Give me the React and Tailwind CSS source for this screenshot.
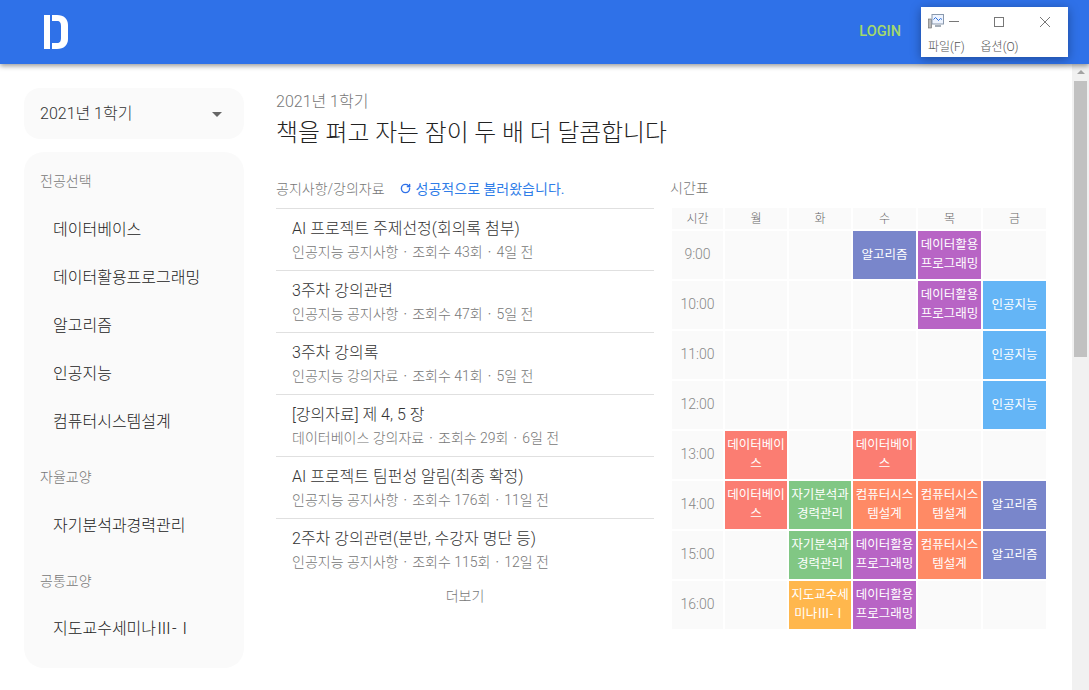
import { RotateCw } from "lucide-react";

const notices = [
  { title: "AI 프로젝트 주제선정(회의록 첨부)", sub: ["인공지능 공지사항", "조회수 43회", "4일 전"] },
  { title: "3주차 강의관련", sub: ["인공지능 공지사항", "조회수 47회", "5일 전"] },
  { title: "3주차 강의록", sub: ["인공지능 강의자료", "조회수 41회", "5일 전"] },
  { title: "[강의자료] 제 4, 5 장", sub: ["데이터베이스 강의자료", "조회수 29회", "6일 전"] },
  { title: "AI 프로젝트 팀펀성 알림(최종 확정)", sub: ["인공지능 공지사항", "조회수 176회", "11일 전"] },
  { title: "2주차 강의관련(분반, 수강자 명단 등)", sub: ["인공지능 공지사항", "조회수 115회", "12일 전"] },
];

const db = { name: "데이터베이스", color: "bg-[#fb7d72]" };
const app = { name: "데이터활용 프로그래밍", color: "bg-[#b864c5]" };
const algo = { name: "알고리즘", color: "bg-[#7986cb]" };
const ai = { name: "인공지능", color: "bg-[#64b5f6]" };
const self = { name: "자기분석과 경력관리", color: "bg-[#81c784]" };
const arch = { name: "컴퓨터시스템설계", color: "bg-[#ff8a65]" };
const sem = { name: "지도교수세미나Ⅲ-Ⅰ", color: "bg-[#ffb74d]" };

const rows = [
  ["9:00", null, null, algo, app, null],
  ["10:00", null, null, null, app, ai],
  ["11:00", null, null, null, null, ai],
  ["12:00", null, null, null, null, ai],
  ["13:00", db, null, db, null, null],
  ["14:00", db, self, arch, arch, algo],
  ["15:00", null, self, app, arch, algo],
  ["16:00", null, sem, app, null, null],
];

function SideItem({ children }) {
  return <div className="h-12 flex items-center pl-[29px] text-base font-light text-[#222]">{children}</div>;
}

function SideLabel({ children, className }) {
  return <div className={`pl-4 text-sm leading-5 font-light text-[#777] ${className}`}>{children}</div>;
}

function Logo() {
  return (
    <svg width="24" height="34" viewBox="0 0 24 34" fill="white">
      <rect x="0" y="0" width="6" height="34" />
      <path d="M8 0h5c7 0 11 4 11 10v14c0 6-4 10-11 10H8v-6h5c3 0 4-2 4-5V11c0-3-1-5-4-5H8z" />
    </svg>
  );
}

function AppIcon() {
  return (
    <svg width="16" height="15" viewBox="0 0 16 15">
      <rect x="0.5" y="5" width="3" height="9" fill="#b8b8b8" stroke="#666" strokeWidth="0.6" />
      <rect x="4" y="0.5" width="11.5" height="9.5" fill="#eef4ff" stroke="#8a99ad" />
      <path d="M5.5 5.5l2-2 3 3 2-2 1.5 1" fill="none" stroke="#2f6fd8" strokeWidth="1" />
      <rect x="7" y="11" width="6" height="2" fill="#a5aeb8" />
    </svg>
  );
}

export default function App() {
  return (
    <div className="h-[690px] w-[1089px] overflow-hidden bg-white font-['Roboto','Noto_Sans_CJK_KR',sans-serif] relative">
      <header className="relative z-10 h-16 bg-[#2f71e8] shadow-[0_2px_5px_rgba(0,0,0,0.4)] flex items-center pl-11 pr-[21px]">
        <Logo />
        <div className="ml-auto text-[14.5px] font-medium text-[#a3d96b] mr-5">LOGIN</div>
        <div className="w-[147px] h-[50px] bg-white shadow-[0_2px_10px_rgba(0,0,0,0.35)] pl-[7px] pr-2 pt-[7px] text-[#555]">
          <div className="flex items-center h-[15px]">
            <AppIcon />
            <div className="ml-[5px] w-[10px] h-px bg-[#777]" />
            <div className="ml-[35px] w-[10px] h-[10px] border border-[#777]" />
            <svg className="ml-[35px]" width="12" height="12" viewBox="0 0 12 12" stroke="#777" fill="none">
              <path d="M1 1l10 10M11 1L1 11" />
            </svg>
          </div>
          <div className="flex gap-4 mt-[11px] text-xs font-light leading-[14px]">
            <span>파일(F)</span>
            <span>옵션(O)</span>
          </div>
        </div>
      </header>

      <div className="flex h-[626px]">
        <aside className="w-[220px] ml-6 mt-6 shrink-0">
          <div className="h-[51px] rounded-2xl bg-[#fafafa] flex items-center justify-between pl-4 pr-[22px] text-base font-light text-[#333]">
            <span>2021년 1학기</span>
            <span className="w-0 h-0 border-x-[5px] border-x-transparent border-t-[5px] border-t-[#666] mt-[2px]" />
          </div>
          <div className="mt-[13px] h-[516px] rounded-[20px] bg-[#fafafa] pt-[19px]">
            <SideLabel>전공선택</SideLabel>
            <div className="mt-[15px]">
              <SideItem>데이터베이스</SideItem>
              <SideItem>데이터활용프로그래밍</SideItem>
              <SideItem>알고리즘</SideItem>
              <SideItem>인공지능</SideItem>
              <SideItem>컴퓨터시스템설계</SideItem>
            </div>
            <SideLabel className="mt-[21px]">자율교양</SideLabel>
            <div className="mt-[15px]">
              <SideItem>자기분석과경력관리</SideItem>
            </div>
            <SideLabel className="mt-[21px]">공통교양</SideLabel>
            <div className="mt-[14px]">
              <SideItem>지도교수세미나Ⅲ-Ⅰ</SideItem>
            </div>
          </div>
        </aside>

        <main className="ml-8 w-[770px] shrink-0 pt-7">
          <div className="text-base leading-5 font-light text-[#777]">2021년 1학기</div>
          <h1 className="mt-[5px] text-[23.8px] leading-8 font-light text-[#222]">책을 펴고 자는 잠이 두 배 더 달콤합니다</h1>

          <div className="flex mt-[27px]">
            <section className="w-[378px] shrink-0">
              <div className="h-8 flex items-center text-sm font-light text-[#777] pb-[7px]">
                <span>공지사항/강의자료</span>
                <RotateCw className="ml-[15px] mr-[5px] text-[#2f71e8]" size={11} strokeWidth={3} />
                <span className="font-normal text-[#2f7de8]">성공적으로 불러왔습니다.</span>
              </div>
              {notices.map((n) => (
                <div key={n.title} className="h-[62px] border-t border-[#e0e0e0] pl-4 pt-2">
                  <div className="text-base leading-6 font-light text-[#333]">{n.title}</div>
                  <div className="mt-[-2px] text-sm leading-6 font-light text-[#777]">
                    {n.sub[0]}
                    <span className="font-['Noto_Sans_CJK_KR',sans-serif]"> · </span>
                    {n.sub[1]}
                    <span className="font-['Noto_Sans_CJK_KR',sans-serif]"> · </span>
                    {n.sub[2]}
                  </div>
                </div>
              ))}
              <div className="text-center text-sm font-light text-[#777] mt-1.5">더보기</div>
            </section>

            <section className="ml-4 w-[376px] shrink-0">
              <div className="h-8 text-sm leading-6 font-light text-[#777]">시간표</div>
              <div className="ml-[2px] w-[374px] grid grid-cols-[51px_62px_62px_63px_63px_63px] grid-rows-[21px_repeat(8,48px)] gap-[2px] text-sm font-light text-[#888]">
                {["시간", "월", "화", "수", "목", "금"].map((d) => (
                  <div key={d} className="bg-[#fafafa] flex items-center justify-center text-xs text-[#666]">{d}</div>
                ))}
                {rows.map((row) =>
                  row.map((cell, i) => {
                    if (i === 0) {
                      return (
                        <div key={row[0]} className="bg-[#fafafa] flex items-center justify-center pb-[2px]">{cell}</div>
                      );
                    }
                    if (!cell) return <div key={row[0] + i} className="bg-[#fafafa]" />;
                    return (
                      <div
                        key={row[0] + i}
                        className={`${cell.color} flex items-center justify-center text-center text-white text-[12.5px] font-normal leading-[19px] break-all pb-[2px]`}
                      >
                        {cell.name}
                      </div>
                    );
                  })
                )}
              </div>
            </section>
          </div>
        </main>

        <div className="w-[17px] ml-auto bg-[#f1f1f1] flex flex-col items-center shrink-0">
          <div className="w-0 h-0 mt-[6px] border-x-[4px] border-x-transparent border-b-[4px] border-b-[#a3a3a3]" />
          <div className="w-[13px] h-[276px] mt-[7px] bg-[#c1c1c1]" />
        </div>
      </div>
    </div>
  );
}
